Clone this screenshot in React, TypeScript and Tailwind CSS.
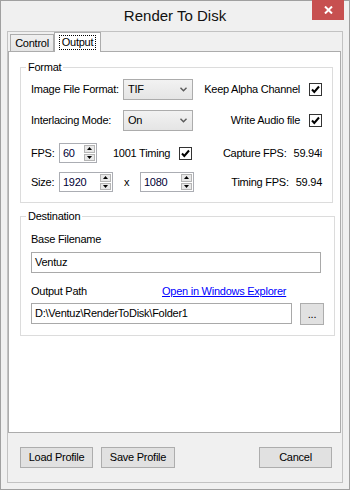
import React from 'react'

function Chevron() {
  return (
    <svg width="7" height="5" viewBox="0 0 7 5" className="mr-[5px] shrink-0">
      <path d="M0.5 0.8 L3.5 3.8 L6.5 0.8" fill="none" stroke="#5a5a5a" strokeWidth="1.4" />
    </svg>
  )
}

function Combo({ value }: { value: string }) {
  return (
    <div className="w-[70px] h-[21px] border border-[#acacac] bg-gradient-to-b from-[#f2f2f2] to-[#e5e5e5] flex items-center pl-[4px]">
      <span className="flex-1">{value}</span>
      <Chevron />
    </div>
  )
}

function Check() {
  return (
    <div className="w-[13px] h-[13px] border border-[#333333] bg-white flex items-center justify-center shrink-0">
      <svg width="11" height="11" viewBox="0 0 11 11">
        <path d="M2 5.5 L4.3 8 L9 2.5" fill="none" stroke="#000" strokeWidth="2" />
      </svg>
    </div>
  )
}

function Spin({ value, width }: { value: string; width: string }) {
  return (
    <div className={`${width} h-[20px] border border-[#abadb3] bg-white flex`}>
      <span className="flex-1 pl-[3px] leading-[18px] text-[#000033]">{value}</span>
      <div className="w-[12px] flex flex-col gap-[1px] py-[1px] pr-[1px]">
        <div className="flex-1 bg-[#e8e8e8] border border-[#b5b5b5] flex items-center justify-center">
          <svg width="5" height="3" viewBox="0 0 5 3">
            <path d="M0 3 L2.5 0 L5 3 Z" fill="#000" />
          </svg>
        </div>
        <div className="flex-1 bg-[#e8e8e8] border border-[#b5b5b5] flex items-center justify-center">
          <svg width="5" height="3" viewBox="0 0 5 3">
            <path d="M0 0 L2.5 3 L5 0 Z" fill="#000" />
          </svg>
        </div>
      </div>
    </div>
  )
}

function Button({ label, className }: { label: string; className: string }) {
  return (
    <button
      type="button"
      className={`${className} h-[21px] border border-[#adadad] bg-[#e1e1e1] flex items-center justify-center`}
    >
      {label}
    </button>
  )
}

export default function App() {
  return (
    <div className="w-[350px] h-[490px] border border-[#a0a0a0] bg-[#f0f0f0] flex flex-col font-['Liberation_Sans',Arial,sans-serif] text-[11px] text-black tracking-[-0.25px] leading-[13px]">
      {/* Title bar */}
      <div className="h-[30px] grid grid-cols-[1fr_auto_1fr]">
        <div />
        <div className="text-[15px] tracking-normal leading-[18px] pt-[6px] text-[#111]">Render To Disk</div>
        <div className="flex justify-end items-start">
          <div className="w-[32px] h-[20px] -mt-px mr-[5px] bg-[#c75050] flex items-center justify-center">
            <svg width="9" height="8" viewBox="0 0 9 8">
              <path d="M1 0.5 L8 7.5 M8 0.5 L1 7.5" stroke="#fff" strokeWidth="2" />
            </svg>
          </div>
        </div>
      </div>

      {/* Client area */}
      <div className="ml-[6px] w-[336px] h-[452px] border border-[#c2c2c2] flex flex-col">
        {/* Tabs */}
        <div className="h-[19px] flex items-end pl-[2px]">
          <div className="w-[44px] h-[17px] border border-b-0 border-[#acacac] bg-gradient-to-b from-[#f0f0f0] to-[#e5e5e5] flex items-center justify-center">
            Control
          </div>
          <div className="relative z-10 w-[47px] h-[20px] -mb-px border border-b-0 border-[#acacac] bg-white flex items-start justify-center pt-[2px]">
            <span className="border border-dotted border-black px-[2px] leading-[13px]">Output</span>
          </div>
        </div>

        {/* Tab page */}
        <div className="w-[333px] h-[382px] border border-[#acacac] bg-white flex flex-col">
          {/* Format */}
          <fieldset className="ml-[11px] mt-[9px] w-[313px] border border-[#dcdcdc] px-[10px] pb-[10px] flex flex-col">
            <legend className="-ml-[5px] px-[2px] leading-[13px]">Format</legend>

            <div className="mt-[5px] h-[21px] flex items-center">
              <span className="w-[92px]">Image File Format:</span>
              <Combo value="TIF" />
              <div className="flex-1 flex items-center justify-end">
                <span>Keep Alpha Channel</span>
                <div className="ml-[9px]">
                  <Check />
                </div>
              </div>
            </div>

            <div className="mt-[10px] h-[21px] flex items-center">
              <span className="w-[92px]">Interlacing Mode:</span>
              <Combo value="On" />
              <div className="flex-1 flex items-center justify-end">
                <span>Write Audio file</span>
                <div className="ml-[9px]">
                  <Check />
                </div>
              </div>
            </div>

            <div className="mt-[12px] h-[20px] flex items-center">
              <span className="w-[28px]">FPS:</span>
              <Spin value="60" width="w-[38px]" />
              <span className="ml-[16px] w-[66px]">1001 Timing</span>
              <Check />
              <div className="flex-1 flex items-center justify-end">
                <span>Capture FPS:</span>
                <span className="ml-[7px]">59.94i</span>
              </div>
            </div>

            <div className="mt-[9px] h-[20px] flex items-center">
              <span className="w-[28px]">Size:</span>
              <Spin value="1920" width="w-[54px]" />
              <span className="w-[27px] text-center">x</span>
              <Spin value="1080" width="w-[54px]" />
              <div className="flex-1 flex items-center justify-end">
                <span>Timing FPS:</span>
                <span className="ml-[7px]">59.94</span>
              </div>
            </div>
          </fieldset>

          {/* Destination */}
          <fieldset className="ml-[11px] mt-[7px] w-[312px] border border-[#dcdcdc] px-[10px] pb-[10px] flex flex-col">
            <legend className="-ml-[5px] px-[2px] leading-[13px]">Destination</legend>

            <div className="mt-[10px]">Base Filename</div>
            <div className="mt-[6px] w-[290px] h-[21px] border border-[#a9a9a9] bg-white flex items-center pl-[3px]">
              Ventuz
            </div>

            <div className="mt-[12px] flex items-center">
              <span className="w-[131px]">Output Path</span>
              <a href="#" className="text-[#0000ff] underline">
                Open in Windows Explorer
              </a>
            </div>
            <div className="mt-[5px] flex items-start">
              <div className="w-[261px] h-[21px] border border-[#a9a9a9] bg-white flex items-center pl-[3px]">
                D:\Ventuz\RenderToDisk\Folder1
              </div>
              <Button label="..." className="ml-[8px] w-[24px] h-[22px]" />
            </div>
          </fieldset>
        </div>

        {/* Bottom buttons */}
        <div className="mt-[14px] flex">
          <Button label="Load Profile" className="ml-[12px] w-[73px]" />
          <Button label="Save Profile" className="ml-[8px] w-[74px]" />
          <Button label="Cancel" className="ml-auto mr-[10px] w-[73px]" />
        </div>
      </div>
    </div>
  )
}
